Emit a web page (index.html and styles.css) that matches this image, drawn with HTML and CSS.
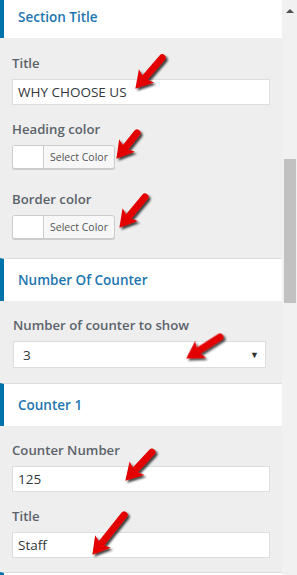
FILE: index.html
```html
<!DOCTYPE html>
<html>
<head>
<meta charset="utf-8">
<link rel="stylesheet" href="styles.css">
</head>
<body>
<div class="page">
  <div class="panel">
    <div class="section-head first">Section Title</div>
    <div class="section-body">
      <div class="control">
        <label class="ctl-label">Title</label>
        <div class="text-input">WHY CHOOSE US</div>
      </div>
      <div class="control color-ctl">
        <label class="ctl-label">Heading color</label>
        <div class="color-btn"><span class="swatch"></span><span class="btn-text">Select Color</span></div>
      </div>
      <div class="control color-ctl last">
        <label class="ctl-label">Border color</label>
        <div class="color-btn"><span class="swatch"></span><span class="btn-text">Select Color</span></div>
      </div>
    </div>

    <div class="section-head">Number Of Counter</div>
    <div class="section-body body2">
      <div class="control last">
        <label class="ctl-label">Number of counter to show</label>
        <div class="select-input"><span>3</span><span class="caret">&#9660;</span></div>
      </div>
    </div>

    <div class="section-head">Counter 1</div>
    <div class="section-body body3">
      <div class="control">
        <label class="ctl-label">Counter Number</label>
        <div class="text-input">125</div>
      </div>
      <div class="control last">
        <label class="ctl-label">Title</label>
        <div class="text-input">Staff</div>
      </div>
    </div>
    <div class="section-head"></div>

    <svg class="arrows" width="282" height="575" viewBox="0 0 282 575">
      <defs>
        <filter id="sh" x="-50%" y="-50%" width="200%" height="200%">
          <feDropShadow dx="2" dy="2" stdDeviation="1.2" flood-color="#000" flood-opacity="0.75"/>
        </filter>
        <g id="ah">
          <polygon points="1,0 -16,-10 -12.5,0 -16,10" fill="#e30000"/>
        </g>
      </defs>
      <g filter="url(#sh)">
        <g transform="translate(136,88) rotate(130.9)">
          <line x1="-40" y1="0" x2="-11" y2="0" stroke="#e30000" stroke-width="7" stroke-linecap="round"/>
          <use href="#ah"/>
        </g>
        <g transform="translate(117,158) rotate(128.7)">
          <line x1="-32" y1="0" x2="-11" y2="0" stroke="#e30000" stroke-width="7" stroke-linecap="round"/>
          <use href="#ah"/>
        </g>
        <g transform="translate(120,227) rotate(129.8)">
          <line x1="-39" y1="0" x2="-11" y2="0" stroke="#e30000" stroke-width="7" stroke-linecap="round"/>
          <use href="#ah"/>
        </g>
        <g transform="translate(187,358) rotate(147.5)">
          <line x1="-39" y1="0" x2="-11" y2="0" stroke="#e30000" stroke-width="7" stroke-linecap="round"/>
          <use href="#ah"/>
        </g>
        <g transform="translate(126,480) rotate(132.9)">
          <line x1="-38" y1="0" x2="-11" y2="0" stroke="#e30000" stroke-width="7" stroke-linecap="round"/>
          <use href="#ah"/>
        </g>
        <g transform="translate(93,554) rotate(128.5)">
          <line x1="-50" y1="0" x2="-11" y2="0" stroke="#e30000" stroke-width="7" stroke-linecap="round"/>
          <use href="#ah"/>
        </g>
      </g>
    </svg>
  </div>
  <div class="scrollbar">
    <div class="sb-up"></div>
    <div class="sb-thumb"></div>
  </div>
</div>
</body>
</html>
```

FILE: styles.css
```css
html, body {
  margin: 0;
  padding: 0;
  background: #eeeeee;
  font-family: "Open Sans", "Noto Sans", sans-serif;
}
.page {
  display: flex;
  width: 297px;
  height: 575px;
  overflow: hidden;
}
.panel {
  position: relative;
  width: 282px;
  flex: none;
  background: #eeeeee;
}
.section-head {
  box-sizing: border-box;
  height: 43px;
  background: #fff;
  border-left: 4px solid #0073aa;
  border-top: 1px solid #dddddd;
  padding-left: 14px;
  display: flex;
  align-items: center;
  font-size: 13.5px;
  font-weight: 600;
  color: #1e76b0;
}
.section-head.first {
  margin-top: -5px;
}
.section-body {
  padding: 15px 12px 19px 12px;
}
.body2 { padding: 14px 12px 15px 13px; }
.body3 { padding: 14px 12px 14px 12px; }
.control {
  margin-bottom: 14px;
}
.control.color-ctl {
  margin-bottom: 20px;
}
.control.last {
  margin-bottom: 0;
}
.ctl-label {
  display: block;
  font-size: 13.2px;
  font-weight: 600;
  line-height: 20px;
  color: #5b636b;
  margin-bottom: 6px;
}
.text-input {
  box-sizing: border-box;
  width: 258px;
  height: 26px;
  background: #fff;
  border: 1px solid #dddddd;
  padding: 0 5px;
  font-size: 13.5px;
  line-height: 24px;
  color: #32373c;
}
.select-input {
  box-sizing: border-box;
  width: 253px;
  height: 27px;
  margin-top: 2px;
  background: #fff;
  border: 1px solid #dddddd;
  padding: 0 6px 0 9px;
  display: flex;
  justify-content: space-between;
  align-items: center;
  font-size: 13.5px;
  color: #32373c;
}
.caret {
  font-size: 9px;
  color: #333;
}
.color-btn {
  box-sizing: border-box;
  display: flex;
  width: 103px;
  height: 24px;
  border: 1px solid #cccccc;
  border-radius: 3px;
  box-shadow: 0 1px 0 #cccccc;
  overflow: hidden;
  background: #f7f7f7;
}
.swatch {
  width: 30px;
  background: #fff;
  border-right: 1px solid #cccccc;
}
.btn-text {
  flex: 1;
  text-align: center;
  font-size: 10.5px;
  line-height: 22px;
  color: #555555;
}
.arrows {
  position: absolute;
  left: 0;
  top: 0;
  pointer-events: none;
}
.scrollbar {
  width: 15px;
  flex: none;
  background: #f1f1f1;
}
.sb-up {
  width: 0;
  height: 0;
  margin: 9px auto 0 auto;
  border-left: 4px solid transparent;
  border-right: 4px solid transparent;
  border-bottom: 4px solid #505050;
}
.sb-thumb {
  margin: 146px 0 0 2px;
  width: 12px;
  height: 144px;
  background: #c1c1c1;
}
```
